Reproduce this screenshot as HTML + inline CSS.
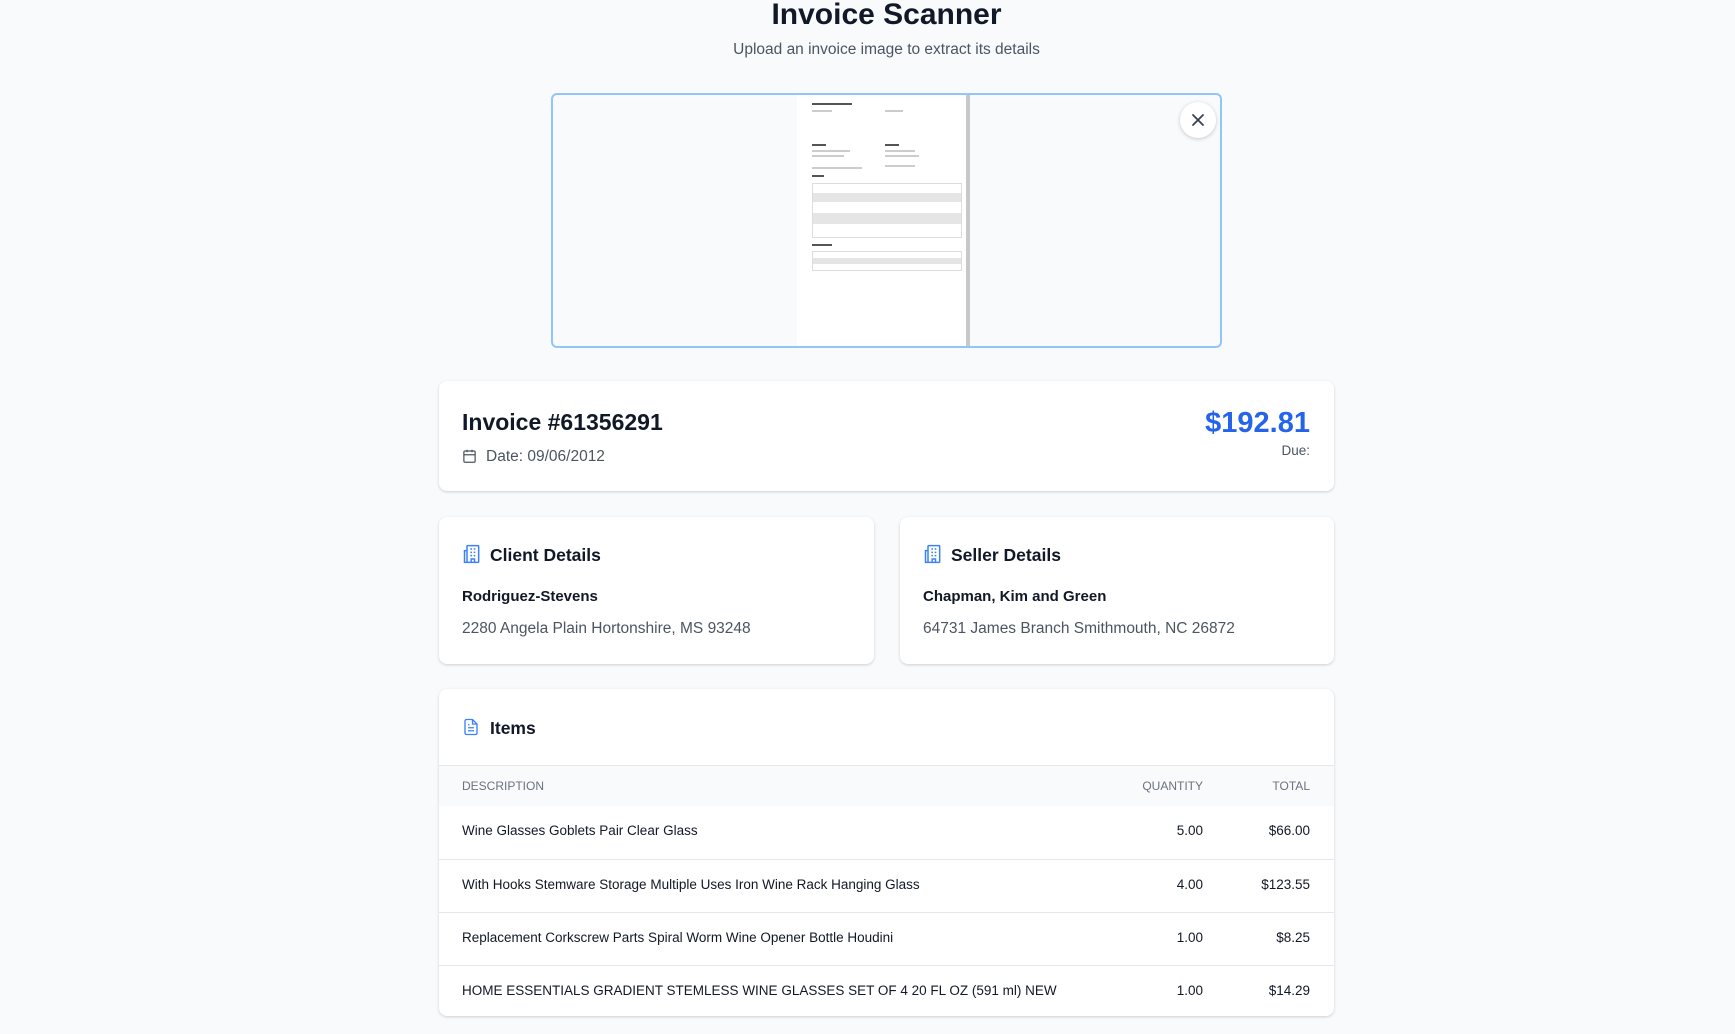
<!DOCTYPE html>
<html><head><meta charset="utf-8"><style>
*{box-sizing:border-box;margin:0;padding:0}
body{width:1735px;height:1034px;overflow:hidden;background:#f8fafc;font-family:"Liberation Sans",sans-serif;color:#111827;position:relative}
.abs{position:absolute}
.card{position:absolute;background:#fff;border-radius:8px;box-shadow:0 1px 3px rgba(0,0,0,.12),0 1px 2px rgba(0,0,0,.06)}
h1{position:absolute;left:0;width:1773px;text-align:center;top:-2px;font-size:30px;font-weight:bold;color:#111827}
.sub{position:absolute;left:0;width:1773px;text-align:center;top:41px;font-size:15.5px;color:#4b5563}
.hd{position:absolute;font-size:17.5px;font-weight:bold;color:#111827}
.ico{position:absolute}
.name{position:absolute;font-size:15px;font-weight:bold}
.addr{position:absolute;font-size:15.5px;color:#4b5563}
.row{position:absolute;left:0;width:895px;height:53px;border-top:1px solid #e5e7eb;font-size:13.5px}
.row span{position:absolute;top:17px}
.d{left:23px}.q{right:131px}.t{right:24px}
.ln{position:absolute;height:2px;background:#ccc}
</style></head><body>
<h1>Invoice Scanner</h1>
<div class="sub">Upload an invoice image to extract its details</div>

<div class="abs" style="left:551px;top:93px;width:671px;height:255px;border:2px solid #93c5fd;border-radius:6px;background:#f8fafc;overflow:hidden">
  <div class="abs" style="left:-2px;top:0;width:2px;height:255px;background:#111"></div>
  <div class="abs" style="left:244px;top:0;width:169px;height:255px;background:#fff">
    <div class="ln" style="left:15px;top:8px;width:40px;background:#555"></div>
    <div class="ln" style="left:15px;top:15px;width:20px"></div><div class="ln" style="left:88px;top:15px;width:18px"></div>
    <div class="ln" style="left:15px;top:49px;width:14px;background:#555"></div><div class="ln" style="left:88px;top:49px;width:14px;background:#555"></div>
    <div class="ln" style="left:15px;top:55px;width:38px"></div><div class="ln" style="left:88px;top:55px;width:30px"></div>
    <div class="ln" style="left:15px;top:60px;width:32px"></div><div class="ln" style="left:88px;top:60px;width:34px"></div>
    <div class="ln" style="left:15px;top:72px;width:50px"></div><div class="ln" style="left:88px;top:70px;width:30px"></div>
    <div class="ln" style="left:15px;top:80px;width:12px;background:#555"></div>
    <div class="abs" style="left:15px;top:88px;width:150px;height:55px;border:1px solid #ddd;background:linear-gradient(#fff 0 9px,#e5e5e5 9px 18px,#fff 18px 29px,#e5e5e5 29px 40px,#fff 40px)"></div>
    <div class="ln" style="left:15px;top:149px;width:20px;background:#555"></div>
    <div class="abs" style="left:15px;top:156px;width:150px;height:20px;border:1px solid #ddd;background:linear-gradient(#fff 0 6px,#e5e5e5 6px 12px,#fff 12px)"></div>
  </div>
  <div class="abs" style="left:413px;top:0;width:4px;height:255px;background:#c8c8c8"></div>
  <div class="abs" style="left:627px;top:7px;width:36px;height:36px;border-radius:50%;background:#fff;box-shadow:0 1px 4px rgba(0,0,0,.2)">
    <svg width="36" height="36" viewBox="0 0 36 36"><path d="M13 13L23 23M23 13L13 23" stroke="#374151" stroke-width="1.8" stroke-linecap="round"/></svg>
  </div>
</div>

<div class="card" style="left:439px;top:381px;width:895px;height:110px">
  <div class="abs" style="left:23px;top:28px;font-size:23px;font-weight:bold">Invoice #61356291</div>
  <svg class="ico" style="left:23px;top:67px" width="15" height="16" viewBox="0 0 24 24" fill="none" stroke="#4b5563" stroke-width="2"><rect x="3" y="4" width="18" height="18" rx="2"/><path d="M16 2v4M8 2v4M3 10h18"/></svg>
  <div class="abs" style="left:47px;top:67px;font-size:15.5px;color:#4b5563">Date: 09/06/2012</div>
  <div class="abs" style="right:24px;top:26px;font-size:29px;font-weight:bold;color:#2563eb">$192.81</div>
  <div class="abs" style="right:24px;top:62px;font-size:13.5px;color:#4b5563">Due:</div>
</div>

<div class="card" style="left:439px;top:517px;width:435px;height:147px">
  <svg class="ico" style="left:23px;top:27px" width="20" height="20" viewBox="0 0 24 24" fill="none" stroke="#3b82f6" stroke-width="1.8"><rect x="6" y="2" width="14" height="20" rx="1"/><path d="M6 8H3v14h3M10 6h2M14 6h2M10 10h2M14 10h2M10 14h2M14 14h2M11 22v-4h4v4"/></svg>
  <div class="hd" style="left:51px;top:28px">Client Details</div>
  <div class="name" style="left:23px;top:71px">Rodriguez-Stevens</div>
  <div class="addr" style="left:23px;top:103px">2280 Angela Plain Hortonshire, MS 93248</div>
</div>
<div class="card" style="left:900px;top:517px;width:434px;height:147px">
  <svg class="ico" style="left:23px;top:27px" width="20" height="20" viewBox="0 0 24 24" fill="none" stroke="#3b82f6" stroke-width="1.8"><rect x="6" y="2" width="14" height="20" rx="1"/><path d="M6 8H3v14h3M10 6h2M14 6h2M10 10h2M14 10h2M10 14h2M14 14h2M11 22v-4h4v4"/></svg>
  <div class="hd" style="left:51px;top:28px">Seller Details</div>
  <div class="name" style="left:23px;top:71px">Chapman, Kim and Green</div>
  <div class="addr" style="left:23px;top:103px">64731 James Branch Smithmouth, NC 26872</div>
</div>

<div class="card" style="left:439px;top:689px;width:895px;height:327px;overflow:hidden">
  <svg class="ico" style="left:23px;top:28px" width="18" height="20" viewBox="0 0 24 24" fill="none" stroke="#3b82f6" stroke-width="1.8"><path d="M14 2H6a2 2 0 0 0-2 2v16a2 2 0 0 0 2 2h12a2 2 0 0 0 2-2V8z"/><path d="M14 2v6h6M16 13H8M16 17H8M10 9H8"/></svg>
  <div class="hd" style="left:51px;top:29px">Items</div>
  <div class="abs" style="left:0;top:76px;width:895px;height:41px;background:#f9fafb;border-top:1px solid #e5e7eb;font-size:12px;color:#6b7280">
    <span class="abs" style="left:23px;top:13px">DESCRIPTION</span>
    <span class="abs" style="right:131px;top:13px">QUANTITY</span>
    <span class="abs" style="right:24px;top:13px">TOTAL</span>
  </div>
  <div class="row" style="top:117px;border-top:none"><span class="d">Wine Glasses Goblets Pair Clear Glass</span><span class="q">5.00</span><span class="t">$66.00</span></div>
  <div class="row" style="top:170px"><span class="d">With Hooks Stemware Storage Multiple Uses Iron Wine Rack Hanging Glass</span><span class="q">4.00</span><span class="t">$123.55</span></div>
  <div class="row" style="top:223px"><span class="d">Replacement Corkscrew Parts Spiral Worm Wine Opener Bottle Houdini</span><span class="q">1.00</span><span class="t">$8.25</span></div>
  <div class="row" style="top:276px"><span class="d">HOME ESSENTIALS GRADIENT STEMLESS WINE GLASSES SET OF 4 20 FL OZ (591 ml) NEW</span><span class="q">1.00</span><span class="t">$14.29</span></div>
</div>
</body></html>
